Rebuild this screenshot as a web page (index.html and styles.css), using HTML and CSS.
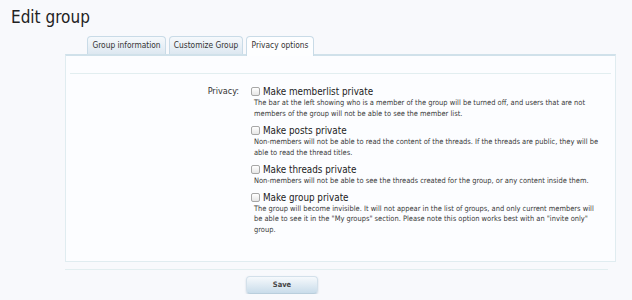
FILE: index.html
```html
<!DOCTYPE html>
<html>
<head>
<meta charset="utf-8">
<link rel="stylesheet" href="styles.css">
</head>
<body>
<h1 class="title">Edit group</h1>
<div class="main">
  <div class="tabs">
    <div class="tab t1">Group information</div>
    <div class="tab t2">Customize Group</div>
    <div class="tab t3 active">Privacy options</div>
  </div>
  <div class="panel">
    <div class="section">
      <div class="row">
        <div class="row-label">Privacy:</div>
        <div class="options">
          <div class="opt">
            <label class="opt-label"><input type="checkbox" class="cb"><span>Make memberlist private</span></label>
            <p class="desc">The bar at the left showing who is a member of the group will be turned off, and users that are not<br>members of the group will not be able to see the member list.</p>
          </div>
          <div class="opt">
            <label class="opt-label"><input type="checkbox" class="cb"><span>Make posts private</span></label>
            <p class="desc">Non-members will not be able to read the content of the threads. If the threads are public, they will be<br>able to read the thread titles.</p>
          </div>
          <div class="opt">
            <label class="opt-label"><input type="checkbox" class="cb"><span>Make threads private</span></label>
            <p class="desc">Non-members will not be able to see the threads created for the group, or any content inside them.</p>
          </div>
          <div class="opt">
            <label class="opt-label"><input type="checkbox" class="cb"><span>Make group private</span></label>
            <p class="desc">The group will become invisible. It will not appear in the list of groups, and only current members will<br>be able to see it in the "My groups" section. Please note this option works best with an "invite only"<br>group.</p>
          </div>
        </div>
      </div>
    </div>
  </div>
  <div class="actions">
    <button class="save">Save</button>
  </div>
</div>
</body>
</html>
```

FILE: styles.css
```css
html, body {
  margin: 0;
  padding: 0;
  background: #f8f9fc;
  font-family: "DejaVu Sans Condensed", "DejaVu Sans", sans-serif;
  color: #333;
}
.title {
  margin: 0;
  padding: 7px 0 0 11px;
  font-size: 17px;
  line-height: 20px;
  font-weight: normal;
  color: #222;
}
.main {
  margin: 9px 0 0 65px;
  width: 551px;
}
.tabs {
  display: flex;
  gap: 3px;
  padding-left: 22px;
  height: 18px;
  position: relative;
  z-index: 1;
}
.tab {
  box-sizing: border-box;
  height: 18px;
  border: 1px solid #c9dbe7;
  border-bottom: none;
  border-radius: 4px 4px 0 0;
  background: linear-gradient(#f6f9fc, #dde8f1);
  font-size: 8.3px;
  line-height: 17px;
  text-align: center;
  color: #333;
}
.t1 { width: 79px; }
.t2 { width: 74px; }
.t3 { width: 68px; }
.tab.active {
  background: #fdfeff;
  height: 20px;
}
.panel {
  box-sizing: border-box;
  height: 208px;
  border: 1px solid #e0ecf0;
  border-top: 2px solid #d0e1ea;
  background: #fcfdff;
  padding: 17px 4px 0 4px;
}
.section {
  border-top: 1px solid #e2eef0;
  padding-top: 11px;
}
.row {
  display: grid;
  grid-template-columns: 169px 1fr;
  column-gap: 12px;
}
.row-label {
  text-align: right;
  font-size: 9px;
  line-height: 13px;
  color: #333;
}
.opt {
  margin-bottom: 4px;
}
.opt-label {
  display: flex;
  align-items: center;
  gap: 3px;
  height: 13px;
  font-size: 9.8px;
  color: #222;
}
.cb {
  appearance: none;
  -webkit-appearance: none;
  margin: 0;
  width: 9px;
  height: 9px;
  box-sizing: border-box;
  border: 1px solid #a7a7a7;
  border-radius: 2px;
  background: linear-gradient(#ffffff, #e6e6e6);
}
.desc {
  margin: 0;
  padding-left: 3px;
  font-size: 7.45px;
  line-height: 10.9px;
  color: #3a3a3a;
  white-space: nowrap;
}
.actions {
  margin-top: 7px;
  width: 543px;
  border-top: 1px solid #e2eef0;
  padding: 2px 0 0 181px;
  box-sizing: border-box;
}
.save {
  width: 72px;
  height: 18px;
  border: 1px solid #d3e0ea;
  border-bottom-color: #b9cedc;
  border-radius: 4px;
  background: linear-gradient(#f6f9fc, #c9dcea);
  box-shadow: 0 1px 2px rgba(120, 150, 170, 0.35);
  font-family: "DejaVu Sans Condensed", "DejaVu Sans", sans-serif;
  font-size: 7.5px;
  font-weight: bold;
  color: #444;
  padding: 0;
}
```
